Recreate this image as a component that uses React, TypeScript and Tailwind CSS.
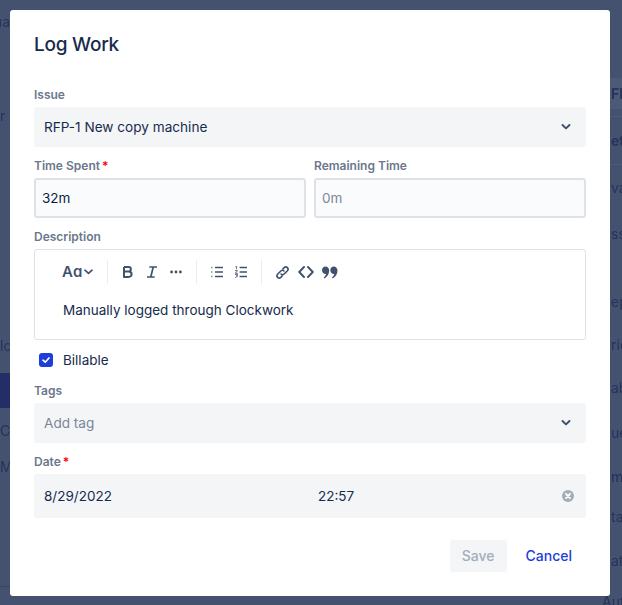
import React from "react";

function Chevron() {
  return (
    <svg width="10" height="8" viewBox="0 0 10 8" className="shrink-0">
      <path d="M1.5 2 L5 5.4 L8.5 2" fill="none" stroke="#42526e" strokeWidth="2" strokeLinecap="round" strokeLinejoin="round" />
    </svg>
  );
}

function Label({ children, required }: { children: React.ReactNode; required?: boolean }) {
  return (
    <div className="mb-[5px] h-[15px] text-[12px] leading-[15px] font-semibold text-[#6b778c]">
      {children}
      {required && <span className="ml-[2px] text-[#ff0000]">*</span>}
    </div>
  );
}

function Select({ text, muted }: { text: string; muted?: boolean }) {
  return (
    <div className="flex h-10 items-center justify-between rounded-[3px] bg-[#f4f5f7] pl-[10px] pr-[15px] text-[13.6px]">
      <span className={muted ? "text-[#7a869a]" : "text-[#172b4d]"}>{text}</span>
      <Chevron />
    </div>
  );
}

function Field({ value, muted }: { value: string; muted?: boolean }) {
  return (
    <div className={`flex h-10 items-center rounded-[3px] border-2 border-[#dfe1e6] bg-[#fafbfc] pl-[6px] ${muted ? "text-[#7a869a]" : "text-[#091e42]"}`}>
      {value}
    </div>
  );
}

const Sep = () => <div className="ml-[14px] h-6 w-px bg-[#ebecf0]" />;

function Toolbar() {
  const c = "#42526e";
  return (
    <div className="flex h-6 items-center pl-[27px]">
      <span className="flex w-[45px] items-center text-[15px] font-semibold text-[#42526e]">
        Aɑ
        <svg width="9" height="6" viewBox="0 0 9 6" className="ml-[2px]"><path d="M1 1.2 L4.5 4.4 L8 1.2" fill="none" stroke={c} strokeWidth="1.7" strokeLinecap="round" strokeLinejoin="round" /></svg>
      </span>
      <div className="h-6 w-px bg-[#ebecf0]" />
      <svg width="10" height="12" viewBox="0 0 10 12" className="ml-[15px]">
        <path d="M1 1 H5.6 C8.6 1 8.6 5.6 5.6 5.6 H1 M5.6 5.6 C9.6 5.6 9.6 11 5.6 11 H1 V1" fill="none" stroke={c} strokeWidth="2" strokeLinejoin="round" />
      </svg>
      <svg width="10" height="12" viewBox="0 0 10 12" className="ml-[14px]">
        <path d="M3 1 H9.5 M0.5 11 H7 M6.2 1 L3.8 11" fill="none" stroke={c} strokeWidth="1.7" strokeLinecap="round" />
      </svg>
      <svg width="12" height="4" viewBox="0 0 12 4" className="ml-[13px]">
        <circle cx="1.6" cy="2" r="1.4" fill={c} /><circle cx="6" cy="2" r="1.4" fill={c} /><circle cx="10.4" cy="2" r="1.4" fill={c} />
      </svg>
      <Sep />
      <svg width="12" height="12" viewBox="0 0 12 12" className="ml-[14px]">
        <path d="M0 1.5 H1.6 M0 6 H1.6 M0 10.5 H1.6" fill="none" stroke="#8993a4" strokeWidth="1.6" />
        <path d="M4 1.5 H12 M4 6 H12 M4 10.5 H12" fill="none" stroke={c} strokeWidth="1.6" />
      </svg>
      <svg width="12" height="12" viewBox="0 0 12 12" className="ml-[12px]">
        <path d="M4.6 1.5 H12 M4.6 6 H12 M4.6 10.5 H12" fill="none" stroke={c} strokeWidth="1.6" />
        <path d="M0.4 0.6 L1.6 0.3 V3.4 M0 4.6 H2.6 L0.2 7.4 H2.8 M0 8.6 H2.8 L1.4 9.9 H2.8 L0.2 11.8" fill="none" stroke={c} strokeWidth="0.8" />
      </svg>
      <Sep />
      <svg width="15" height="15" viewBox="2 2 14 14" className="ml-[13px]">
        <path d="M7.6 10.4 C8.8 11.6 10 11 10.8 10.2 L13.6 7.4 C15.4 5.4 12.6 2.6 10.6 4.4 L9.4 5.6 M10.4 7.6 C9.2 6.4 8 7 7.2 7.8 L4.4 10.6 C2.6 12.6 5.4 15.4 7.4 13.6 L8.6 12.4" fill="none" stroke={c} strokeWidth="1.5" strokeLinecap="round" />
      </svg>
      <svg width="16" height="12" viewBox="0 0 16 12" className="ml-[8px]">
        <path d="M6 1 L1.2 6 L6 11 M10 1 L14.8 6 L10 11" fill="none" stroke={c} strokeWidth="1.9" strokeLinecap="round" strokeLinejoin="round" />
      </svg>
      <svg width="16" height="13" viewBox="0 0 16 13" className="ml-[8px]">
        <path d="M3.5 0.5 C5.6 0.5 7.2 2.2 7.2 4.6 C7.2 8.2 5.2 11 2.4 12.6 L1.6 11.6 C3 10.4 3.8 9.4 4 8 C2 8.2 0 6.6 0 4.2 C0 2 1.6 0.5 3.5 0.5 Z M11.8 0.5 C13.9 0.5 15.5 2.2 15.5 4.6 C15.5 8.2 13.5 11 10.7 12.6 L9.9 11.6 C11.3 10.4 12.1 9.4 12.3 8 C10.3 8.2 8.3 6.6 8.3 4.2 C8.3 2 9.9 0.5 11.8 0.5 Z" fill={c} />
      </svg>
    </div>
  );
}

const peek = "flex items-center whitespace-nowrap text-[14px] text-[#27335a] blur-[0.5px]";

function Backdrop() {
  return (
    <div className="flex h-full justify-between">
      <div className="flex w-[10px] flex-col overflow-hidden [&>*]:shrink-0">
        <div className={`${peek} h-11 justify-end`}>ua</div>
        <div className="h-[50px]" />
        <div className={`${peek} h-11 gap-[6px]`}>r <span>l</span></div>
        <div className="h-[186px]" />
        <div className={`${peek} h-11`}>lc</div>
        <div className="h-[5px]" />
        <div className="h-[35px] bg-[#232d66]" />
        <div className={`${peek} h-[46px]`}>Co</div>
        <div className={`${peek} h-[26px]`}>M</div>
        <div className="h-[107px] border-b border-[#38456a]" />
      </div>
      <div className="flex w-[12px] flex-col [&>*]:shrink-0">
        <div className="h-[78px]" />
        <div className={`${peek} -ml-[10px] h-[31px] bg-[#4d5a77] pl-[11px] font-bold`}>FF</div>
        <div className="h-2 border-b border-[#4f5c79]" />
        <div className={`${peek} h-12 border-b border-[#4f5c79] pl-px font-bold`}>et</div>
        <div className={`${peek} h-[46px] pl-px`}>vai</div>
        <div className={`${peek} h-[46px] pl-px`}>ss</div>
        <div className="h-[23px]" />
        <div className={`${peek} h-11 pl-px`}>ep</div>
        <div className={`${peek} h-[42px] pl-px`}>rio</div>
        <div className={`${peek} h-11 pl-px`}>ab</div>
        <div className={`${peek} h-[45px] pl-px`}>ue</div>
        <div className={`${peek} h-11 pl-px font-medium`}>m</div>
        <div className={`${peek} h-9 pl-px`}>tar</div>
        <div className={`${peek} h-[52px] pl-px`}>ate</div>
        <div className={`${peek} -ml-2 h-[30px]`}>Auto</div>
      </div>
    </div>
  );
}

export default function App() {
  return (
    <div
      className="relative h-[605px] w-[622px] overflow-hidden bg-[#44516f] text-[13.5px] leading-5"
      style={{ fontFamily: "Inter, 'Noto Sans', sans-serif" }}
    >
      <Backdrop />

      <div className="absolute left-[10px] top-[10px] flex h-[586px] w-[600px] flex-col rounded-[3px] bg-white px-6">
        <h1 className="mb-[28px] pt-[21px] text-[19px] leading-7 font-medium tracking-[-0.25px] text-[#172b4d]">Log Work</h1>

        <Label>Issue</Label>
        <Select text="RFP-1 New copy machine" />

        <div className="mt-[11px] grid grid-cols-2 gap-x-2">
          <div>
            <Label required>Time Spent</Label>
            <Field value="32m" />
          </div>
          <div>
            <Label>Remaining Time</Label>
            <Field value="0m" muted />
          </div>
        </div>

        <div className="mt-[11px]"><Label>Description</Label></div>
        <div className="h-[91px] rounded-[3px] border border-[#dfe1e6] bg-white pt-[10px]">
          <Toolbar />
          <div className="mt-[16px] pl-[28px] text-[#172b4d]">Manually logged through Clockwork</div>
        </div>

        <div className="mt-[10px] flex h-5 items-center pl-[5px]">
          <span className="flex h-[14px] w-[14px] items-center justify-center rounded-[3px] bg-[#1d3ed8]">
            <svg width="10" height="10" viewBox="0 0 10 10"><path d="M2 5.2 L4.2 7.2 L8 3" fill="none" stroke="white" strokeWidth="1.7" strokeLinecap="round" strokeLinejoin="round" /></svg>
          </span>
          <span className="ml-[10px] text-[#172b4d]">Billable</span>
        </div>

        <div className="mt-[13px]"><Label>Tags</Label></div>
        <Select text="Add tag" muted />

        <div className="mt-[11px]"><Label required>Date</Label></div>
        <div className="flex h-11 items-center rounded-[3px] bg-[#f4f5f7] pl-[10px] pr-[12px] text-[#172b4d]">
          <span className="w-[274px]">8/29/2022</span>
          <span>22:57</span>
          <svg width="12" height="12" viewBox="0 0 12 12" className="ml-auto">
            <circle cx="6" cy="6" r="6" fill="#a5adba" />
            <path d="M4 4 L8 8 M8 4 L4 8" stroke="white" strokeWidth="1.8" strokeLinecap="round" />
          </svg>
        </div>

        <div className="mt-[22px] flex items-center justify-end gap-[19px] pr-[14px]">
          <button className="h-8 w-[57px] rounded-[3px] bg-[#f4f5f7] text-[14px] font-medium text-[#a5adba]">Save</button>
          <button className="text-[14px] font-medium text-[#1d3ed8]">Cancel</button>
        </div>
      </div>
    </div>
  );
}
